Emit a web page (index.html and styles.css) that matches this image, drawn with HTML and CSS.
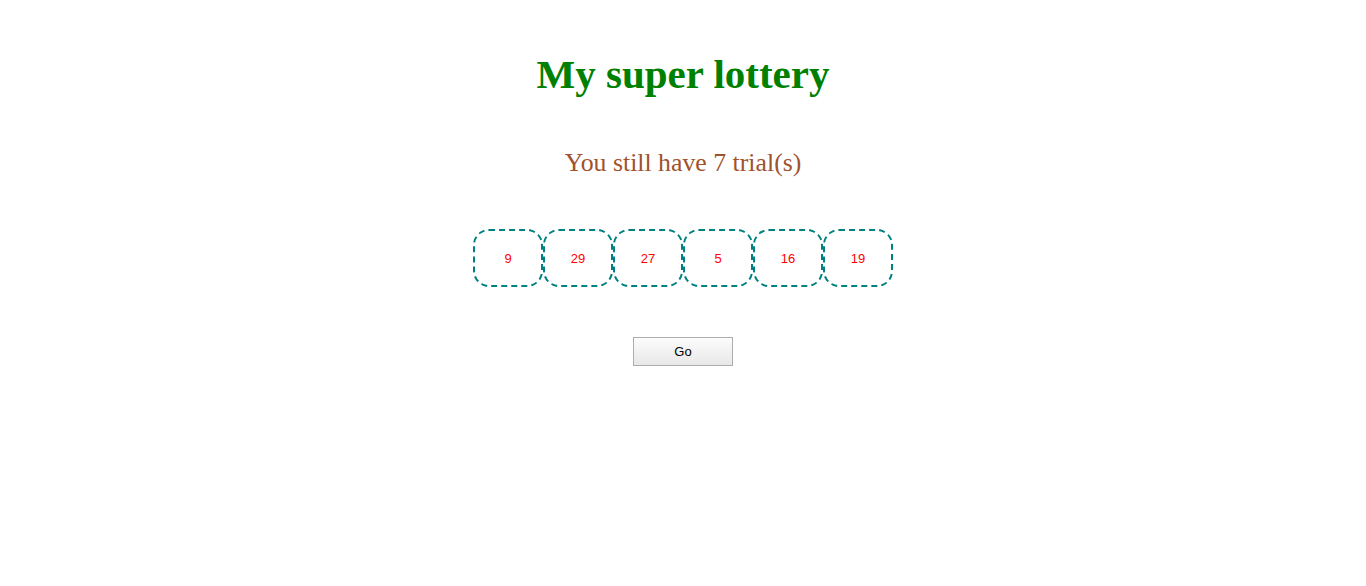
FILE: index.html
```html
<!DOCTYPE html>
<html lang="en">
<head>
<meta charset="utf-8">
<title>My super lottery</title>
<link rel="stylesheet" href="styles.css">
</head>
<body>
<main class="page">
  <h1 class="title">My super lottery</h1>
  <p class="trials">You still have 7 trial(s)</p>
  <div class="balls">
    <div class="ball">9</div>
    <div class="ball">29</div>
    <div class="ball">27</div>
    <div class="ball">5</div>
    <div class="ball">16</div>
    <div class="ball">19</div>
  </div>
  <button class="go" type="button">Go</button>
</main>
</body>
</html>
```
FILE: styles.css
```css
html, body {
  margin: 0;
  padding: 0;
  background: #ffffff;
}

.page {
  display: flex;
  flex-direction: column;
  align-items: center;
  padding-top: 50px;
  font-family: "Liberation Serif", "Times New Roman", serif;
}

.title {
  margin: 0 0 50px 0;
  font-size: 41px;
  line-height: 48px;
  font-weight: bold;
  color: #008000;
}

.trials {
  margin: 0 0 51px 0;
  font-size: 25.8px;
  line-height: 30px;
  color: #a0522d;
}

.balls {
  display: flex;
  margin: 0 0 50px 0;
}

.ball {
  box-sizing: border-box;
  width: 70px;
  height: 58px;
  border: 2px dashed #008080;
  border-radius: 16px;
  display: flex;
  align-items: center;
  justify-content: center;
  font-family: "Liberation Sans", Arial, sans-serif;
  font-size: 13px;
  color: #ff0000;
}

.go {
  box-sizing: border-box;
  width: 100px;
  height: 29px;
  padding: 0;
  border: 1px solid #adadad;
  border-radius: 0;
  background: linear-gradient(#fcfcfc, #e8e8e8);
  font-family: "Liberation Sans", Arial, sans-serif;
  font-size: 13px;
  color: #000000;
}
```
